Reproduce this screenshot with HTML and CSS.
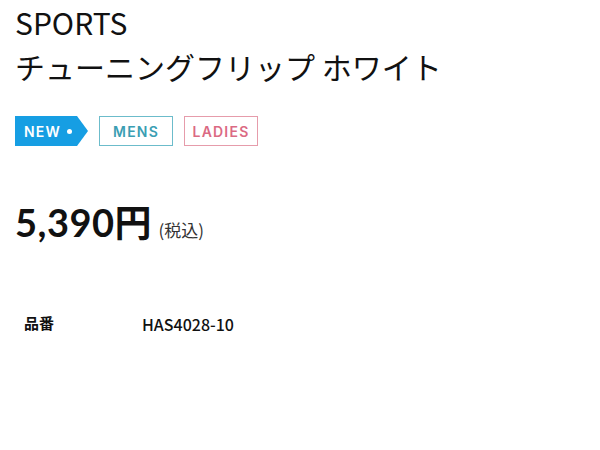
FILE: index.html
```html
<!DOCTYPE html>
<html lang="ja">
<head>
<meta charset="utf-8">
<link rel="stylesheet" href="styles.css">
</head>
<body>
<div class="product">
  <h1 class="title">SPORTS<br>チューニングフリップ ホワイト</h1>
  <div class="tags">
    <span class="tag tag-new">NEW<i class="dot"></i></span>
    <span class="tag tag-mens">MENS</span>
    <span class="tag tag-ladies">LADIES</span>
  </div>
  <div class="price"><span class="amount">5,390</span><span class="yen">円</span><span class="tax">(税込)</span></div>
  <dl class="spec">
    <dt>品番</dt>
    <dd>HAS4028-10</dd>
  </dl>
</div>
</body>
</html>
```
FILE: styles.css
```css
html, body { margin: 0; padding: 0; background: #fff; }
body { font-family: "Noto Sans CJK JP", "Noto Sans", sans-serif; color: #111; }
.product { padding: 0 15px; }
.title {
  margin: 0;
  font-size: 30px;
  font-weight: 400;
  line-height: 44px;
  color: #111;
}
.tags { display: flex; gap: 11px; margin-top: 28px; align-items: center; }
.tag {
  box-sizing: border-box;
  height: 30px;
  display: inline-flex;
  align-items: center;
  justify-content: center;
  font-family: "Inter", sans-serif;
  font-weight: 600;
  font-size: 14px;
  letter-spacing: 1.2px;
}
.tag-new {
  width: 73px;
  background: #169ee3;
  color: #fff;
  clip-path: polygon(0 0, 62px 0, 73px 50%, 62px 100%, 0 100%);
  justify-content: flex-start;
  padding-left: 9px;
}
.dot { width: 5px; height: 5px; border-radius: 50%; background: #fff; margin-left: 6px; display: inline-block; }
.tag-mens { width: 74px; border: 1px solid #6cbccb; color: #3a9eb3; }
.tag-ladies { width: 74px; border: 1px solid #e69cab; color: #db6a83; }
.price { margin-top: 48px; display: flex; align-items: baseline; }
.amount { font-family: "Lato", sans-serif; font-weight: 700; font-size: 38px; letter-spacing: 0.5px; }
.yen { font-weight: 700; font-size: 37px; }
.tax { font-size: 17px; margin-left: 7px; color: #333; }
.spec { display: flex; margin: 64px 0 0 9px; font-size: 15px; }
.spec dt { width: 118px; font-weight: 700; }
.spec dd { margin: 0; font-size: 16px; font-weight: 500; }
```
